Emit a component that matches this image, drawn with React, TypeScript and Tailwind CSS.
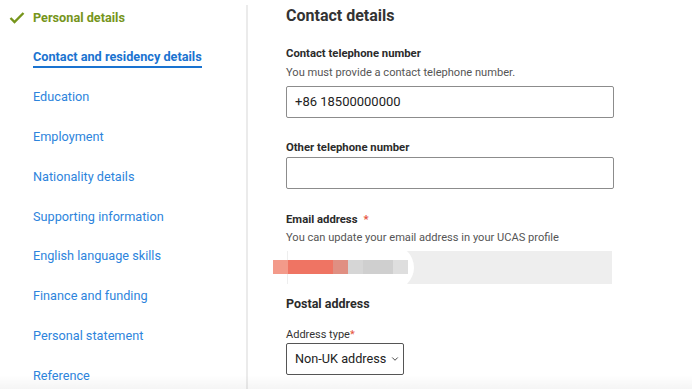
import { ChevronDown } from 'lucide-react';

const NAV = [
  'Education',
  'Employment',
  'Nationality details',
  'Supporting information',
  'English language skills',
  'Finance and funding',
  'Personal statement',
  'Reference',
];

function Label({ children, required }: { children: React.ReactNode; required?: boolean }) {
  return (
    <p className="text-[11.3px] font-bold leading-[16px] text-[#2b2b2b]">
      {children}
      {required && <span className="ml-[6px] text-[#e5533d]">*</span>}
    </p>
  );
}

export default function App() {
  return (
    <div className="relative flex h-[389px] w-[692px] overflow-hidden bg-white font-['Roboto',sans-serif]">
      <nav className="flex w-[246px] shrink-0 flex-col pt-[8px]">
        <div className="flex h-[20px] items-center">
          <svg width="16" height="12" viewBox="0 0 16 12" className="ml-[9px] mr-[8px]">
            <polyline points="1.5,6 5.5,10 14.5,1" fill="none" stroke="#76951b" strokeWidth="2.4" />
          </svg>
          <span className="text-[12.7px] font-bold leading-[20px] text-[#76951b]">Personal details</span>
        </div>
        <div className="mt-[20px] flex h-[20px] items-start pl-[33px]">
          <span className="border-b-2 border-[#1a73d0] text-[12.7px] font-bold leading-[18px] text-[#1a73d0]">
            Contact and residency details
          </span>
        </div>
        {NAV.map((item, i) => (
          <div
            key={item}
            className={`${i === 0 ? 'mt-[19px]' : 'mt-[19.85px]'} pl-[33px] text-[12.7px] leading-[20px] text-[#2d84dc]`}
          >
            {item}
          </div>
        ))}
      </nav>

      <div className="mt-[5px] w-[2px] shrink-0 bg-[#ebebeb]" />

      <main className="flex flex-col pl-[38px] pt-[6px] text-[#2b2b2b]">
        <h1 className="text-[16px] font-bold leading-[20px] text-[#333]">Contact details</h1>

        <div className="mt-[20px]">
          <Label>Contact telephone number</Label>
          <p className="mt-[3px] text-[11.1px] leading-[16px] text-[#555]">
            You must provide a contact telephone number.
          </p>
          <div className="mt-[5px] flex h-[32px] w-[328px] items-center rounded-[2px] border border-[#8c8c8c] pl-[8px] text-[13px] text-[#222]">
            +86 18500000000
          </div>
        </div>

        <div className="mt-[22px]">
          <Label>Other telephone number</Label>
          <div className="mt-[1px] h-[32px] w-[328px] rounded-[2px] border border-[#8c8c8c]" />
        </div>

        <div className="mt-[23px]">
          <Label required>Email address</Label>
          <p className="mt-[2px] text-[11.1px] leading-[16px] text-[#555]">
            You can update your email address in your UCAS profile
          </p>
          <div className="relative ml-[1px] mt-[5px] h-[33px] w-[325px] bg-[#eeeeee]">
            <div className="absolute left-[1px] top-[-6px] h-[45px] w-[126px] rounded-r-[30px] bg-white" />
            <div className="absolute left-[-14px] top-[9px] flex h-[14px]">
              <div className="w-[15px] bg-[#f39a8a]" />
              <div className="w-[45px] bg-[#ef7463]" />
              <div className="w-[15px] bg-[#e08f82]" />
              <div className="w-[15px] bg-[#d6d6d6]" />
              <div className="w-[30px] bg-[#cfcfcf]" />
              <div className="w-[15px] bg-[#dedede]" />
            </div>
          </div>
        </div>

        <h2 className="mt-[11px] text-[12.5px] font-bold leading-[18px] text-[#2b2b2b]">Postal address</h2>

        <p className="mt-[14px] text-[11px] leading-[16px] text-[#333]">
          Address type<span className="text-[#e5533d]">*</span>
        </p>
        <div className="mt-[0px] flex h-[32px] w-[118px] items-center rounded-[2px] border border-[#555] pl-[8px] text-[12.7px] text-[#222]">
          Non-UK address
          <ChevronDown size={10} className="ml-[4px]" strokeWidth={2} />
        </div>
      </main>

      <div className="pointer-events-none absolute bottom-0 left-0 h-[14px] w-full bg-gradient-to-b from-transparent to-black/[0.04]" />
    </div>
  );
}
